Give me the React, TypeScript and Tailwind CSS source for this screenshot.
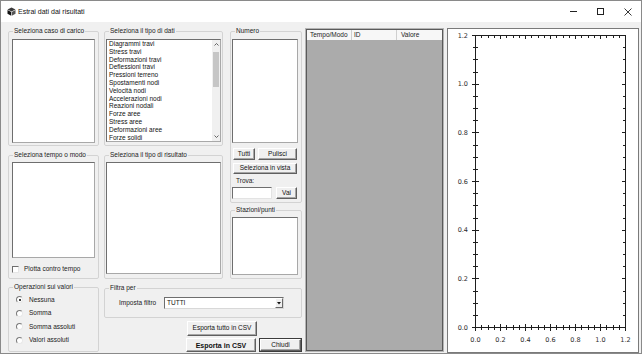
import React from "react";

const items = [
  "Diagrammi travi",
  "Stress travi",
  "Deformazioni travi",
  "Deflessioni travi",
  "Pressioni terreno",
  "Spostamenti nodi",
  "Velocità nodi",
  "Accelerazioni nodi",
  "Reazioni nodali",
  "Forze aree",
  "Stress aree",
  "Deformazioni aree",
  "Forze solidi",
];

function Group({
  label,
  className,
  children,
}: {
  label: string;
  className: string;
  children?: React.ReactNode;
}) {
  return (
    <fieldset className={"border border-[#d3d3d3] rounded-[2px] min-w-0 " + className}>
      <legend className="ml-[4px] px-[1px] text-[6.5px] leading-[8px] text-[#1b1b1b]">{label}</legend>
      {children}
    </fieldset>
  );
}

function ListBox({ className, children }: { className: string; children?: React.ReactNode }) {
  return (
    <div
      className={
        "bg-white border border-t-[#6e6e6e] border-l-[#6e6e6e] border-r-[#a8a8a8] border-b-[#a8a8a8] overflow-hidden " +
        className
      }
    >
      {children}
    </div>
  );
}

function Btn({
  className,
  children,
}: {
  className: string;
  children?: React.ReactNode;
}) {
  return (
    <div
      className={
        "flex items-center justify-center bg-[#f0f0f0] border border-t-white border-l-white border-r-[#5f5f5f] border-b-[#5f5f5f] shadow-[inset_-1px_-1px_0_#a6a6a6] text-[6.5px] leading-none text-[#111] " +
        className
      }
    >
      {children}
    </div>
  );
}

function Radio({ checked, label }: { checked?: boolean; label: string }) {
  return (
    <div className="h-[13.5px] flex items-center">
      <div className="ml-[7px] w-[7px] h-[7px] rounded-full bg-white border border-t-[#7a7a7a] border-l-[#7a7a7a] border-r-[#e8e8e8] border-b-[#e8e8e8] flex items-center justify-center">
        {checked && <div className="w-[2px] h-[2px] rounded-full bg-black" />}
      </div>
      <span className="ml-[6px] text-[6.5px] leading-none text-[#1b1b1b]">{label}</span>
    </div>
  );
}

function Plot() {
  const L = 27,
    R = 177,
    T = 6,
    B = 298;
  const px = (v: number) => Math.round(v) + 0.5;
  const xs: number[] = [];
  for (let i = 0; i <= 24; i++) xs.push(L + (i * (R - L)) / 24);
  const ys: number[] = [];
  for (let i = 0; i <= 24; i++) ys.push(B - (i * (B - T)) / 24);
  const labels = ["0.0", "0.2", "0.4", "0.6", "0.8", "1.0", "1.2"];
  const c = "#1e1e1e";
  return (
    <svg width="190" height="323" viewBox="0 0 190 323" className="block">
      <rect x={px(L)} y={px(T)} width={R - L} height={B - T} fill="white" stroke={c} strokeWidth="1" />
      {xs.map((x, i) => {
        const major = i % 4 === 0;
        const X = px(x);
        return (
          <g key={"x" + i} stroke={c} strokeWidth="1">
            <line x1={X} x2={X} y1={major ? B - 3 : B - 2} y2={major ? B + 4 : B + 3} />
            <line x1={X} x2={X} y1={T} y2={major ? T + 4 : T + 3} />
          </g>
        );
      })}
      {ys.map((y, i) => {
        const major = i % 4 === 0;
        const Y = px(y);
        return (
          <g key={"y" + i} stroke={c} strokeWidth="1">
            <line y1={Y} y2={Y} x1={major ? L - 3 : L - 2} x2={major ? L + 4 : L + 3} />
            <line y1={Y} y2={Y} x1={major ? R - 3 : R - 2} x2={R + 1} />
          </g>
        );
      })}
      {labels.map((t, i) => (
        <text
          key={"lx" + i}
          x={L + 0.5 + i * 25}
          y={311}
          textAnchor="middle"
          dominantBaseline="central"
          fontFamily="DejaVu Sans, sans-serif"
          fontSize="6.5"
          fill="#2a2a2a"
        >
          {t}
        </text>
      ))}
      {labels.map((t, i) => (
        <text
          key={"ly" + i}
          x={20}
          y={B + 0.5 - (i * (B - T)) / 6}
          textAnchor="end"
          dominantBaseline="central"
          fontFamily="DejaVu Sans, sans-serif"
          fontSize="6.5"
          fill="#2a2a2a"
        >
          {t}
        </text>
      ))}
    </svg>
  );
}

export default function App() {
  return (
    <div className="w-[642px] h-[356px] bg-white font-['Liberation_Sans',Arial,sans-serif] overflow-hidden">
      <div className="w-[642px] h-[354px] border border-[#8a8a8a] bg-[#f0f0f0] flex flex-col">
        {/* Title bar */}
        <div className="h-[21px] bg-white flex items-center shrink-0">
          <svg width="9" height="9" viewBox="0 0 9 9" className="ml-[6px]">
            <path d="M4.5 0.5 L8.5 2.5 L4.5 4.5 L0.5 2.5 Z" fill="#3a3a3a" />
            <path d="M0.5 3 L4.2 5 L4.2 8.8 L0.5 6.8 Z" fill="#111" />
            <path d="M8.5 3 L4.8 5 L4.8 8.8 L8.5 6.8 Z" fill="#555" />
          </svg>
          <span className="ml-[2px] text-[7px] leading-none text-[#111]">Estrai dati dai risultati</span>
          <div className="ml-auto flex h-full">
            <div className="w-[27px] h-full flex items-center justify-center">
              <div className="w-[7px] h-px bg-[#222]" />
            </div>
            <div className="w-[27px] h-full flex items-center justify-center">
              <div className="w-[7px] h-[7px] border border-[#222]" />
            </div>
            <div className="w-[27px] h-full flex items-center justify-center">
              <svg width="8" height="8" viewBox="0 0 8 8">
                <path d="M0.5 0.5 L7.5 7.5 M7.5 0.5 L0.5 7.5" stroke="#222" strokeWidth="0.9" />
              </svg>
            </div>
          </div>
        </div>

        {/* Body */}
        <div className="flex pl-[7px] pt-[5px]">
          {/* Left controls area */}
          <div className="flex flex-col w-[294px]">
            <div className="flex">
              {/* Column 1 */}
              <div className="flex flex-col w-[91px]">
                <Group label="Seleziona caso di carico" className="h-[119px] w-[91px]">
                  <ListBox className="mt-[4px] ml-[3px] w-[83px] h-[104px]" />
                </Group>
                <Group label="Seleziona tempo o modo" className="mt-[5px] h-[128px] w-[91px]">
                  <ListBox className="mt-[3px] ml-[3px] w-[83px] h-[96px]" />
                  <div className="mt-[4px] h-[14px] flex items-center">
                    <div className="ml-[3px] w-[7px] h-[7px] bg-white border border-t-[#6e6e6e] border-l-[#6e6e6e] border-r-[#e6e6e6] border-b-[#e6e6e6]" />
                    <span className="ml-[5px] text-[6.5px] leading-none text-[#1b1b1b]">Plotta contro tempo</span>
                  </div>
                </Group>
              </div>

              {/* Column 2 */}
              <div className="flex flex-col w-[119px] ml-[5px]">
                <Group label="Seleziona il tipo di dati" className="h-[119px] w-[119px]">
                  <ListBox className="mt-[4px] ml-[1px] w-[115px] h-[103px] flex">
                    <div className="flex-1 pl-[2px] pt-0 text-[6.5px] leading-[7.8px] text-[#111] whitespace-nowrap">
                      {items.map((t) => (
                        <div key={t}>{t}</div>
                      ))}
                    </div>
                    <div className="w-[8px] bg-[#f0f0f0] flex flex-col items-center">
                      <div className="h-[9px] flex items-center justify-center">
                        <svg width="5" height="3" viewBox="0 0 5 3">
                          <path d="M0.5 2.5 L2.5 0.5 L4.5 2.5" fill="none" stroke="#555" strokeWidth="0.9" />
                        </svg>
                      </div>
                      <div className="mt-[3px] w-[6px] h-[35px] bg-[#c6c6c6]" />
                      <div className="flex-1" />
                      <div className="h-[9px] flex items-center justify-center">
                        <svg width="5" height="3" viewBox="0 0 5 3">
                          <path d="M0.5 0.5 L2.5 2.5 L4.5 0.5" fill="none" stroke="#555" strokeWidth="0.9" />
                        </svg>
                      </div>
                    </div>
                  </ListBox>
                </Group>
                <Group label="Seleziona il tipo di risultato" className="mt-[5px] h-[128px] w-[119px]">
                  <ListBox className="mt-[3px] ml-[1px] w-[115px] h-[112px]" />
                </Group>
              </div>

              {/* Column 3 */}
              <div className="flex flex-col w-[72px] ml-[7px]">
                <Group label="Numero" className="h-[176px] w-[72px]">
                  <ListBox className="mt-[4px] ml-[1px] w-[66px] h-[104px]" />
                  <div className="mt-[5px] flex h-[12px]">
                    <Btn className="ml-[2px] w-[22px] h-[12px]">Tutti</Btn>
                    <Btn className="ml-[3px] w-[39px] h-[12px]">Pulisci</Btn>
                  </div>
                  <Btn className="mt-[3px] ml-[2px] w-[64px] h-[11px]">Seleziona in vista</Btn>
                  <div className="mt-[2px] h-[10px] flex items-center">
                    <span className="ml-[5px] text-[6.5px] leading-none text-[#1b1b1b]">Trova:</span>
                  </div>
                  <div className="mt-[1px] flex h-[12px]">
                    <div className="ml-[1px] w-[40px] h-[12px] bg-white border border-t-[#6e6e6e] border-l-[#6e6e6e] border-r-[#e3e3e3] border-b-[#e3e3e3]" />
                    <Btn className="ml-[4px] w-[21px] h-[12px]">Vai</Btn>
                  </div>
                </Group>
                <Group label="Stazioni/punti" className="mt-[3px] h-[73px] w-[72px]">
                  <ListBox className="mt-[3px] ml-[1px] w-[66px] h-[58px]" />
                </Group>
              </div>
            </div>

            {/* Bottom row */}
            <div className="flex mt-[4px]">
              <Group label="Operazioni sui valori" className="h-[69px] w-[91px]">
                <div className="mt-[2px]">
                  <Radio checked label="Nessuna" />
                  <Radio label="Somma" />
                  <Radio label="Somma assoluti" />
                  <Radio label="Valori assoluti" />
                </div>
              </Group>
              <div className="ml-[5px] w-[198px] flex flex-col">
                <Group label="Filtra per" className="mt-[1px] h-[34px] w-[198px]">
                  <div className="mt-[5px] h-[12px] flex items-center">
                    <span className="ml-[14px] w-[45px] text-[6.5px] leading-none text-[#1b1b1b]">Imposta filtro</span>
                    <div className="w-[120px] h-[12px] bg-white border border-t-[#6e6e6e] border-l-[#6e6e6e] border-r-[#d8d8d8] border-b-[#d8d8d8] flex items-center">
                      <span className="ml-[2px] flex-1 text-[6.5px] leading-none text-[#111]">TUTTI</span>
                      <div className="w-[8px] h-[10px] bg-[#f0f0f0] border border-t-white border-l-white border-r-[#6a6a6a] border-b-[#6a6a6a] flex items-center justify-center">
                        <svg width="4" height="3" viewBox="0 0 4 3">
                          <path d="M0 0 L4 0 L2 2.5 Z" fill="#111" />
                        </svg>
                      </div>
                    </div>
                  </div>
                </Group>
                <div className="mt-[3px] flex justify-end pr-[45px]">
                  <Btn className="w-[70px] h-[15px]">Esporta tutto in CSV</Btn>
                </div>
                <div className="mt-[2px] flex justify-end">
                  <Btn className="w-[70px] h-[14px] font-bold text-[7px]">Esporta in CSV</Btn>
                  <div className="ml-[3px] w-[43px] h-[14px] border border-[#3c3c3c]">
                    <Btn className="w-full h-full">Chiudi</Btn>
                  </div>
                </div>
              </div>
            </div>
          </div>

          {/* Data grid */}
          <div className="ml-[3px] mt-[1px] w-[139px] h-[324px] border border-[#b4b4b4]">
            <div className="w-full h-full border border-[#5a5a5a] bg-[#ababab] flex flex-col">
              <div className="h-[10px] bg-[#f7f7f7] flex text-[6.5px] leading-[10px] text-[#222]">
                <div className="w-[45px] pl-[3px] border-r border-[#cfcfcf]">Tempo/Modo</div>
                <div className="w-[45px] pl-[2px] border-r border-[#cfcfcf]">ID</div>
                <div className="flex-1 pl-[4px]">Valore</div>
              </div>
            </div>
          </div>

          {/* Plot */}
          <div className="ml-[3px] mt-[1px] w-[192px] h-[325px] border border-[#7a7a7a] bg-white">
            <Plot />
          </div>
        </div>
      </div>
    </div>
  );
}
